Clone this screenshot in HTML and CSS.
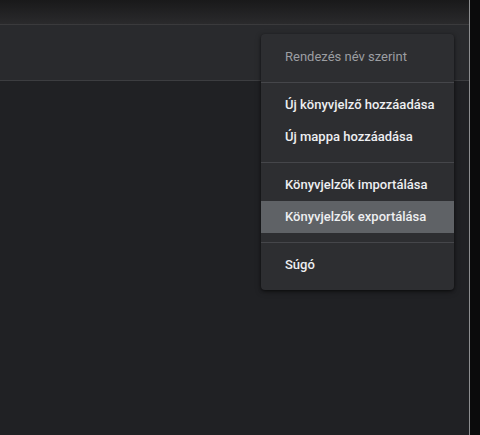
FILE: index.html
```html
<!DOCTYPE html>
<html lang="hu">
<head>
    <meta charset="UTF-8">
    <title>Könyvjelzők</title>
    <link rel="stylesheet" href="styles.css">
</head>
<body>
    <div class="window">
        <div class="main">
            <div class="titlebar"></div>
            <div class="toolbar"></div>
            <div class="content"></div>
        </div>
        <div class="scroll-edge"></div>
    </div>

    <!-- dropdown menu -->
    <div class="menu">
        <div class="menu-item disabled">Rendezés név szerint</div>
        <div class="menu-sep"></div>
        <div class="menu-item">Új könyvjelző hozzáadása</div>
        <div class="menu-item">Új mappa hozzáadása</div>
        <div class="menu-sep"></div>
        <div class="menu-item">Könyvjelzők importálása</div>
        <div class="menu-item active">Könyvjelzők exportálása</div>
        <div class="menu-sep"></div>
        <div class="menu-item">Súgó</div>
    </div>
</body>
</html>
```

FILE: styles.css
```css
body {
    margin: 0;
    background: #202124;
    font-family: Roboto, "Noto Sans", Arial, sans-serif;
    width: 480px;
    height: 435px;
    overflow: hidden;
}

.window {
    display: flex;
    height: 435px;
}

.main {
    flex: 1;
    display: flex;
    flex-direction: column;
}

.titlebar {
    height: 24px;
    background: linear-gradient(#19191a, #2a2a2c);
    border-bottom: 1px solid #3a3a3c;
}

.toolbar {
    height: 55px;
    background: #292a2d;
    border-bottom: 1px solid #3c3d40;
}

.content {
    flex: 1;
    background: #202124;
}

.scroll-edge {
    width: 10px;
    background: #0b0b0c;
    border-left: 1px solid #8d8e90;
}

.menu {
    position: absolute;
    left: 261px;
    top: 34px;
    width: 193px;
    padding: 7px 0 9px;
    background: #2d2e31;
    border-radius: 4px;
    box-shadow: 0 1px 3px rgba(0, 0, 0, 0.5), 0 2px 6px rgba(0, 0, 0, 0.3);
}

.menu-item {
    height: 32px;
    line-height: 32px;
    padding-left: 24px;
    font-size: 13px;
    font-weight: 500;
    color: #eeeff1;
}

.menu-item.disabled {
    color: #9c9ea2;
    font-weight: 400;
}

.menu-item.active {
    background: #5f6266;
}

.menu-sep {
    height: 1px;
    margin: 9px 0 6px;
    background: #45464a;
}
```
